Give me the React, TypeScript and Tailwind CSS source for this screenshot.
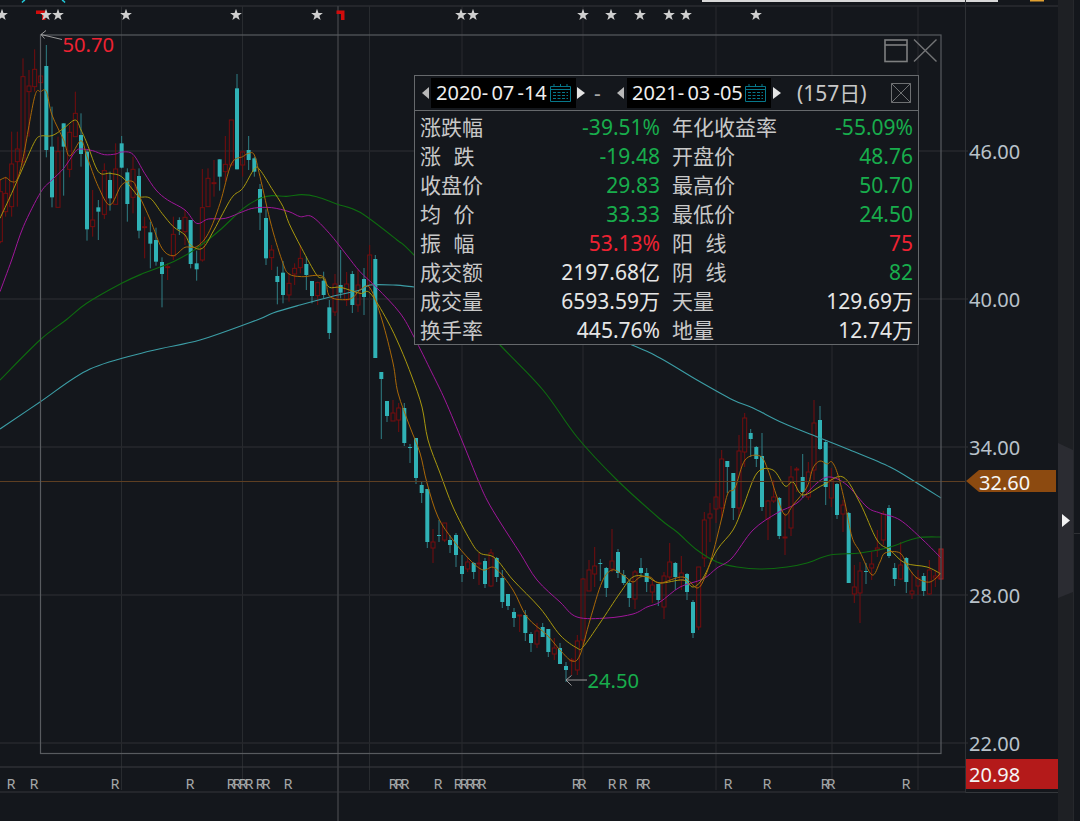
import React from "react";

type C = [number, number, number, number, number, number];
// x, bodyTop, bodyBottom, wickTop, wickBottom, kind (0 red hollow, 1 cyan)
const z = (a: number[][]): C[] =>
  a.map((r) => [r[0] / 3, r[1] / 3, r[2] / 3, r[3] / 3, r[4] / 3, r[5]] as C);

const candles: C[] = [
  ...z([
    [1, 575, 725, 540, 730, 0],
    [17, 580, 635, 530, 650, 0],
    [35, 492, 620, 395, 650, 0],
    [52, 447, 485, 395, 620, 0],
    [69, 230, 485, 175, 500, 0],
    [87, 258, 275, 210, 410, 0],
    [104, 208, 260, 148, 275, 0],
    [122, 228, 248, 228, 248, 0],
    [139, 198, 450, 135, 472, 1],
    [156, 440, 592, 320, 622, 1],
    [174, 455, 622, 410, 622, 0],
    [191, 370, 440, 370, 587, 1],
    [209, 397, 508, 375, 532, 0],
    [226, 340, 410, 275, 410, 0],
    [243, 405, 462, 340, 500, 1],
    [261, 455, 688, 450, 722, 1],
    [278, 660, 680, 570, 710, 0],
    [295, 622, 635, 600, 720, 1],
    [313, 512, 643, 490, 657, 0],
    [330, 540, 595, 515, 632, 1],
    [347, 507, 613, 430, 613, 0],
    [365, 430, 503, 408, 505, 1],
    [382, 517, 612, 505, 665, 1],
    [399, 508, 592, 470, 640, 0],
    [417, 528, 692, 505, 715, 1],
    [434, 680, 682, 650, 775, 0],
    [451, 697, 731, 665, 805, 1],
    [468, 720, 785, 683, 797, 1],
    [486, 786, 822, 772, 922, 1],
    [503, 800, 802, 790, 840, 0],
    [520, 703, 768, 650, 780, 0],
    [538, 660, 688, 652, 705, 1],
    [555, 652, 695, 630, 735, 0],
    [572, 660, 792, 660, 805, 1],
    [590, 790, 808, 752, 842, 1],
    [607, 623, 780, 507, 785, 0],
    [624, 535, 620, 505, 620, 0],
    [642, 548, 550, 480, 590, 0],
    [659, 478, 530, 478, 572, 1],
    [676, 493, 515, 408, 545, 0],
    [694, 360, 495, 360, 495, 0],
    [711, 265, 508, 222, 508, 1],
    [728, 456, 495, 452, 530, 0],
    [746, 450, 480, 408, 510, 1],
    [763, 475, 515, 470, 530, 1],
    [780, 567, 638, 552, 690, 1],
    [798, 654, 775, 628, 795, 1],
    [815, 750, 773, 735, 810, 0],
    [832, 828, 846, 800, 913, 1],
    [849, 818, 885, 783, 910, 1],
    [867, 850, 885, 818, 905, 0],
    [884, 805, 822, 790, 855, 0],
    [901, 775, 803, 735, 820, 0],
    [919, 792, 825, 770, 870, 1],
    [936, 843, 888, 843, 910, 1],
    [953, 848, 887, 845, 915, 0],
    [971, 842, 885, 815, 895, 1],
    [988, 922, 999, 900, 1017, 1],
    [1005, 852, 936, 822, 948, 0],
    [1022, 855, 878, 750, 895, 1],
    [1040, 852, 900, 816, 918, 0],
    [1057, 822, 915, 813, 939, 1],
    [1074, 855, 915, 810, 936, 0],
  ]),
  [364, 279, 297, 268, 315, 1],
  [369.7, 255, 285, 245, 290, 0],
  [375.3, 259, 358, 255, 358, 1],
  [381.3, 372, 379, 372, 439, 1],
  [387, 401, 416, 401, 422, 1],
  [393, 413, 421, 400, 421, 0],
  [398.7, 408, 420, 403, 432, 0],
  [404.3, 408, 443, 403, 446, 1],
  [410, 447, 448, 444, 463, 1],
  [416, 438, 478, 438, 484, 1],
  [421.7, 485, 493, 482, 503, 1],
  [427.3, 489, 542, 489, 548, 1],
  [433, 542, 548, 529, 563, 0],
  [439, 535, 536, 520, 542, 1],
  [444.7, 523, 540, 523, 542, 0],
  [450, 540, 545, 535, 553, 1],
  [456, 535, 555, 533, 567, 1],
  [462, 566, 574, 555, 582, 1],
  [467.7, 562, 569, 558, 572, 0],
  [473.7, 563, 572, 562, 579, 1],
  [479, 563, 564, 553, 585, 0],
  [485, 561, 584, 558, 588, 1],
  [491, 553, 586, 549, 587, 0],
  [496.7, 558, 577, 557, 582, 1],
  [502.3, 578, 602, 570, 608, 1],
  [508, 594, 606, 594, 610, 1],
  [514, 612, 618, 608, 627, 1],
  [519.7, 615, 616, 615, 632, 0],
  [525.3, 615, 633, 610, 641, 1],
  [531, 634, 643, 632, 652, 1],
  [537, 631, 644, 623, 648, 0],
  [542.7, 627, 637, 623, 637, 1],
  [548.3, 629, 652, 629, 657, 1],
  [554.3, 648, 654, 638, 660, 0],
  [560, 648, 664, 643, 664, 1],
  [566, 666, 670, 662, 682, 1],
  [571.7, 660, 661, 658, 675, 0],
  [577.3, 641, 670, 635, 675, 0],
  [583, 579, 640, 578, 645, 0],
  [589, 570, 591, 560, 591, 0],
  [594.7, 566, 574, 547, 587, 0],
  [600.3, 563, 564, 559, 581, 1],
  [606.3, 568, 588, 567, 597, 1],
  [612, 561, 569, 529, 572, 0],
  [618, 552, 573, 549, 578, 1],
  [623.7, 575, 583, 570, 585, 1],
  [629.3, 583, 598, 580, 607, 1],
  [635, 572, 599, 570, 609, 0],
  [641, 568, 573, 558, 577, 1],
  [646.7, 573, 582, 568, 592, 1],
  [652.3, 585, 592, 580, 603, 0],
  [658.3, 584, 600, 584, 606, 1],
  [664, 576, 607, 572, 619, 0],
  [669.7, 562, 577, 543, 582, 0],
  [675.3, 563, 577, 562, 590, 1],
  [681.3, 573, 580, 556, 590, 0],
  [687, 574, 592, 573, 600, 1],
  [693, 602, 633, 600, 638, 1],
  [698.7, 567, 627, 567, 630, 0],
  [704.3, 520, 558, 512, 567, 0],
  [710, 514, 518, 503, 542, 0],
  [716, 497, 509, 483, 523, 0],
  [721.7, 459, 508, 450, 518, 0],
  [727.3, 461, 467, 461, 493, 1],
  [733.3, 473, 508, 473, 520, 1],
  [739, 451, 508, 435, 517, 0],
  [744.7, 418, 452, 413, 467, 0],
  [750.7, 433, 439, 429, 457, 1],
  [756.3, 447, 459, 446, 467, 1],
  [762, 456, 507, 433, 511, 1],
  [768, 501, 519, 500, 540, 0],
  [773.7, 497, 501, 480, 503, 0],
  [779.3, 498, 536, 497, 539, 1],
  [785, 537, 538, 513, 555, 0],
  [791, 477, 528, 466, 536, 0],
  [796.7, 469, 470, 467, 492, 0],
  [802.7, 477, 492, 454, 498, 1],
  [808.3, 472, 497, 462, 500, 0],
  [814, 423, 470, 400, 480, 0],
  [820, 420, 449, 406, 450, 1],
  [825.7, 442, 487, 440, 505, 1],
  [831.3, 480, 498, 468, 507, 0],
  [837, 484, 515, 483, 519, 1],
  [843, 505, 514, 500, 532, 0],
  [848.7, 513, 583, 512, 583, 1],
  [854.3, 587, 594, 565, 603, 0],
  [860, 571, 593, 562, 623, 0],
  [866, 571, 572, 563, 584, 1],
  [871.7, 564, 568, 552, 580, 0],
  [877.3, 548, 550, 530, 557, 0],
  [883.3, 514, 540, 511, 545, 0],
  [889, 508, 556, 505, 558, 1],
  [894.7, 568, 579, 563, 586, 1],
  [900.7, 565, 579, 542, 580, 0],
  [906.3, 558, 582, 557, 593, 1],
  [912, 591, 594, 572, 599, 0],
  [918, 578, 586, 570, 595, 0],
  [923.7, 576, 591, 573, 596, 1],
  [929.3, 570, 594, 560, 595, 0],
  [935.3, 576, 578, 570, 587, 0],
];

const p3 = (a: number[]) => {
  const out: string[] = [];
  for (let i = 0; i < a.length; i += 2) out.push(`${a[i] / 3},${a[i + 1] / 3}`);
  return out.join(" ");
};

// Catmull-Rom through the sampled points, so the averages read as curves
const smooth = (s: string) => {
  const p = s.trim().split(/\s+/).map((q) => q.split(",").map(Number));
  let d = `M${p[0][0]} ${p[0][1]}`;
  for (let i = 0; i < p.length - 1; i++) {
    const a = p[Math.max(i - 1, 0)];
    const b = p[i];
    const c = p[i + 1];
    const e = p[Math.min(i + 2, p.length - 1)];
    d += `C${b[0] + (c[0] - a[0]) / 6} ${b[1] + (c[1] - a[1]) / 6} ${c[0] - (e[0] - b[0]) / 6} ${c[1] - (e[1] - b[1]) / 6} ${c[0]} ${c[1]}`;
  }
  return d;
};

const orange =
  p3([0, 540, 18, 533, 35, 545, 52, 537, 70, 470, 104, 290, 122, 275, 139, 275, 156, 345, 191, 420, 209, 468, 243, 422, 261, 470, 295, 560, 330, 615, 365, 555, 399, 545, 417, 585, 451, 660, 486, 745, 520, 767, 555, 742, 590, 740, 625, 700, 660, 610, 694, 492, 728, 470, 746, 460, 763, 465, 780, 530, 815, 680, 849, 790, 867, 822, 905, 830, 970, 830, 990, 890, 1050, 897, 1080, 870]) +
  " 370,288 382,320 393,363 398,393 410,427 420,453 427,483 438,517 453,540 470,560 483,570 495,568 513,590 527,617 547,635 560,650 572,661 580,655 590,620 602,582 612,570 623,575 633,582 640,577 650,577 660,583 683,577 697,588 705,577 713,553 722,517 728,493 735,488 745,460 760,456 768,470 777,497 785,515 793,505 807,487 813,468 820,461 827,464 832,462 838,475 845,503 852,537 860,552 872,575 880,562 885,553 900,553 908,567 917,578 930,582 941,573";

const yellow =
  p3([0, 655, 35, 580, 70, 500, 104, 425, 122, 408, 156, 407, 191, 385, 226, 360, 243, 390, 261, 430, 295, 515, 330, 520, 365, 530, 399, 570, 417, 590, 451, 595, 486, 640, 520, 680, 555, 705, 572, 735, 607, 745, 642, 690, 694, 595, 728, 565, 763, 507, 780, 510, 815, 565, 849, 620, 867, 670, 905, 745, 950, 825, 970, 835, 988, 862, 1022, 862, 1080, 880]) +
  " 370,293 387,320 400,347 412,377 422,407 428,440 440,473 453,507 470,540 480,553 495,558 513,580 540,608 560,635 577,648 583,647 600,623 620,593 633,577 647,577 660,583 683,580 693,587 703,578 717,550 733,530 743,507 757,473 773,470 785,486 793,482 803,495 823,485 843,477 860,503 877,540 890,550 905,563 927,567 941,574";

const magenta =
  p3([0, 875, 35, 780, 70, 680, 122, 577, 156, 540, 191, 505, 226, 455, 243, 447, 278, 452, 313, 464, 347, 462, 365, 456, 399, 463, 434, 520, 468, 570, 503, 600, 555, 630, 590, 670, 625, 657, 676, 655, 728, 635, 763, 624, 815, 623, 867, 635, 901, 650, 936, 650, 988, 700, 1040, 765, 1080, 815]) +
  " 377,288 400,313 414,337 432,373 445,400 463,443 478,480 487,500 500,522 520,553 537,580 560,602 577,617 607,618 633,614 647,607 660,602 680,587 703,579 717,568 732,558 753,530 777,513 797,503 817,483 830,477 847,485 867,507 880,513 900,520 923,540 941,558";

const green =
  "0,380 40,340 66,320 " +
  p3([260, 910, 365, 850, 430, 820, 520, 785, 590, 745, 660, 690, 730, 625, 780, 595, 815, 587, 860, 589, 905, 584, 950, 590, 1010, 612, 1080, 637]) +
  " 397,240 414,255 500,345 543,390 577,437 617,480 660,519 677,532 697,550 717,562 737,567 760,569 787,567 807,563 830,555 860,553 887,548 917,538 941,537";

const teal =
  "0,429 40,402 90,369 150,351 200,340 257,320 273,313 300,305 330,297 360,290 370,285 393,285 414,287 520,300 632,345 660,358 697,380 733,400 753,408 783,423 820,438 850,450 890,467 917,483 941,498";

const stars = [2, 46, 58, 126, 236, 317, 461, 473, 583, 611, 640, 669, 686, 756];
const starPts = (cx: number, cy: number, r: number) => {
  const pts: string[] = [];
  for (let i = 0; i < 10; i++) {
    const a = -Math.PI / 2 + (i * Math.PI) / 5;
    const rr = i % 2 === 0 ? r : r * 0.4;
    pts.push(`${cx + rr * Math.cos(a)},${cy + rr * Math.sin(a)}`);
  }
  return pts.join(" ");
};

const rs = [11, 34, 115, 190, 231, 237, 243, 249, 260, 266, 288, 393, 399, 405, 438, 458, 464, 470, 476, 482, 576, 582, 612, 623, 640, 646, 728, 767, 825, 831, 906];
const vGrid = [121.5, 242.5, 369.5, 462, 583, 716, 832, 918];
const hGrid = [151, 299, 447, 595, 743];

function Chart() {
  return (
    <svg width={965} height={821} viewBox="0 0 965 821" className="block overflow-visible">
      {/* top clipped row */}
      <rect x={702} y={0} width={296} height={2} fill="#d8d8d8" />
      <rect x={1030} y={0} width={14} height={1.5} fill="#e0a030" />
      <path d="M25 0q-2 1-3 2.5M62 0q2 1 3 2.5" stroke="#22c8d8" strokeWidth={1.4} fill="none" />
      <line x1={0} y1={6} x2={1058} y2={6} stroke="#2a2d31" strokeWidth={1.5} />

      {/* grid */}
      {vGrid.map((x) => (
        <line key={x} x1={x} y1={6} x2={x} y2={790} stroke="#282b2f" strokeWidth={1} />
      ))}
      {hGrid.map((y) => (
        <line key={y} x1={0} y1={y} x2={968} y2={y} stroke="#26292d" strokeWidth={1.5} />
      ))}
      <line x1={0} y1={767} x2={1058} y2={767} stroke="#3a3d41" strokeWidth={1} />
      <line x1={0} y1={792} x2={965} y2={792} stroke="#34373b" strokeWidth={1} />
      <line x1={338} y1={6} x2={338} y2={821} stroke="#3a3d41" strokeWidth={1.6} />

      {/* candles */}
      {candles.map((c, i) => {
        const [x, t, b, wt, wb, k] = c;
        return k === 1 ? (
          <g key={i}>
            <line x1={x} y1={wt} x2={x} y2={wb} stroke="#2f7f85" strokeWidth={1} />
            <rect x={x - 2} y={t} width={4} height={Math.max(b - t, 1)} fill="#30b2b6" />
          </g>
        ) : (
          <g key={i}>
            <line x1={x} y1={wt} x2={x} y2={t} stroke="#760d0e" strokeWidth={1} />
            <line x1={x} y1={b} x2={x} y2={wb} stroke="#760d0e" strokeWidth={1} />
            <rect x={x - 2} y={t} width={4} height={Math.max(b - t, 1)} fill="none" stroke="#760d0e" strokeWidth={1} />
          </g>
        );
      })}
      <rect x={939} y={549} width={4} height={30} fill="#4a0d10" stroke="#b0181c" strokeWidth={1} />

      {/* moving averages */}
      <path d={smooth(teal)} fill="none" stroke="#3c9ea6" strokeWidth={1.1} />
      <path d={smooth(green)} fill="none" stroke="#0e6c10" strokeWidth={1.1} />
      <path d={smooth(magenta)} fill="none" stroke="#a0169a" strokeWidth={1} />
      <path d={smooth(yellow)} fill="none" stroke="#a8970e" strokeWidth={1} />
      <path d={smooth(orange)} fill="none" stroke="#a96808" strokeWidth={1} />

      {/* crosshair */}
      <line x1={0} y1={481.5} x2={965} y2={481.5} stroke="#5e3f22" strokeWidth={1} />

      {/* star markers */}
      <path d="M36 10.5h9.5v9.5h-3.5v-6h-6z" fill="#d00c0c" />
      <path d="M336.5 10.5h8v9.5h-3.5v-6h-4.5z" fill="#d00c0c" />
      {stars.map((x) => (
        <polygon key={x} points={starPts(x, 15, 6.2)} fill="#cfcfcf" />
      ))}

      {/* selection frame */}
      <rect x={40.5} y={35} width={900.5} height={718.5} fill="none" stroke="#585b5f" strokeWidth={1.2} />
      <rect x={885} y={40} width={22} height={21.5} fill="none" stroke="#7e7f80" strokeWidth={1.6} />
      <line x1={885} y1={45} x2={907} y2={45} stroke="#7e7f80" strokeWidth={1.6} />
      <path d="M914 39.5L936.5 61.5M936.5 39.5L914 61.5" stroke="#737476" strokeWidth={1.4} fill="none" />

      {/* extreme arrows */}
      <path d="M62 39.5L41 34.5M41 34.5L46 30.5M41 34.5L44.5 38.5" stroke="#a8a8a8" strokeWidth={0.9} fill="none" />
      <path d="M587 680H566M571.5 675.5L566 680L571.5 685.5" stroke="#a8a8a8" strokeWidth={0.9} fill="none" />
      <text x={62.5} y={51.5} fontSize={20.2} fill="#ee2232">50.70</text>
      <text x={587.5} y={688} fontSize={20.2} fill="#18ad4c">24.50</text>

      {/* R markers */}
      {rs.map((x, i) => (
        <text key={i} x={x} y={789} fontSize={14.5} fill="#a4a6a8" textAnchor="middle">
          R
        </text>
      ))}
    </svg>
  );
}

function Cal() {
  return (
    <svg width={21} height={18} viewBox="0 0 21 18" className="ml-auto mr-[5px] shrink-0" fill="none" stroke="#07778a">
      <path d="M.5 2.5h20v15H.5zM.5 5.5h20" />
      <path d="M4 0v3M10.5 0v3M17 0v3" />
      <path d="M3 8.5h15M3 11.5h15M3 14.5h15" strokeDasharray="3 1.5" />
    </svg>
  );
}

const Tri = ({ dir, c, cls }: { dir: "l" | "r"; c: string; cls: string }) => (
  <svg width={8} height={12} viewBox="0 0 8 12" className={cls}>
    <polygon points={dir === "l" ? "7,0 7,12 0,6" : "0,0 0,12 8,6"} fill={c} />
  </svg>
);

const G = "text-[#18ad4c]";
const R = "text-[#ee2232]";
const W = "text-[#e6e6e6]";
const rows: [string, string, string, string, string, string][] = [
  ["涨跌幅", "-39.51%", G, "年化收益率", "-55.09%", G],
  ["涨 跌", "-19.48", G, "开盘价", "48.76", G],
  ["收盘价", "29.83", G, "最高价", "50.70", G],
  ["均 价", "33.33", G, "最低价", "24.50", G],
  ["振 幅", "53.13%", R, "阳 线", "75", R],
  ["成交额", "2197.68亿", W, "阴 线", "82", G],
  ["成交量", "6593.59万", W, "天量", "129.69万", W],
  ["换手率", "445.76%", W, "地量", "12.74万", W],
];

function Panel() {
  return (
    <div className="absolute left-[414px] top-[75px] w-[505px] h-[270px] bg-[#14171c] border border-[#66696c] flex flex-col text-[21px] leading-none">
      <div className="h-[35px] shrink-0 flex items-center pl-[7px] border-b border-[#66696c] text-[#d8d8d8]">
        <Tri dir="l" c="#b8b8b8" cls="shrink-0" />
        <div className="ml-[1px] w-[145px] h-[30px] bg-black flex items-center pl-[5px] shrink-0 text-[20px] text-[#eeeeee] [word-spacing:-2px] whitespace-nowrap">
          2020- 07 -14
          <Cal />
        </div>
        <Tri dir="r" c="#e4e4e4" cls="ml-[1px] shrink-0" />
        <span className="ml-[9px] w-[16px] text-[#a8a8a8]">-</span>
        <Tri dir="l" c="#b8b8b8" cls="ml-[7px] shrink-0" />
        <div className="ml-[2px] w-[144px] h-[30px] bg-black flex items-center pl-[5px] shrink-0 text-[20px] text-[#eeeeee] [word-spacing:-2px] whitespace-nowrap">
          2021- 03 -05
          <Cal />
        </div>
        <Tri dir="r" c="#e4e4e4" cls="ml-[2px] shrink-0" />
        <span className="ml-[16px] text-[#c8c8c8] whitespace-nowrap">(157日)</span>
        <svg width={20} height={20} viewBox="0 0 20 20" className="ml-[24px] shrink-0" fill="none" stroke="#6e7072">
          <path d="M.5.5h19v19H.5zM.5.5l19 19M19.5.5l-19 19" />
        </svg>
      </div>
      <div className="pt-[2px] pl-[5px] pr-[5px]">
        {rows.map((r) => (
          <div key={r[0]} className="h-[29px] grid grid-cols-[240px_241px] gap-x-[12px] items-center">
            <div className="flex justify-between items-center">
              <span className="text-[#c8c8c8] [word-spacing:7px]">{r[0]}</span>
              <span className={r[2]}>{r[1]}</span>
            </div>
            <div className="flex justify-between items-center">
              <span className="text-[#c8c8c8] [word-spacing:7px]">{r[3]}</span>
              <span className={r[5]}>{r[4]}</span>
            </div>
          </div>
        ))}
      </div>
    </div>
  );
}

function Axis() {
  return (
    <div className="relative w-[93px] h-[793px] shrink-0 border-l border-[#2e3135] flex flex-col text-[20px] leading-[28px] text-[#b9c2ca]">
      <div className="pt-[138px] pl-[3px] flex flex-col gap-[120px]">
        {["46.00", "40.00", "34.00", "28.00", "22.00"].map((t) => (
          <span key={t} className="h-[28px]">
            {t}
          </span>
        ))}
      </div>
      <div className="mt-[1px] h-[30px] bg-[#b41a1a] text-[#f4f4f4] flex items-center pl-[3px] pt-[1px]">20.98</div>
      <div className="mt-[3px] border-t border-[#34373b]" />
      <div className="absolute left-0 top-[470px] w-[90px] h-[22px] bg-[#8c4a10] [clip-path:polygon(0_50%,13px_0,100%_0,100%_100%,13px_100%)] text-[#f6f6f6] leading-[25px] pl-[13px]">
        32.60
      </div>
    </div>
  );
}

export default function App() {
  return (
    <div className="relative w-[1080px] h-[821px] overflow-hidden bg-[#14171c] flex items-start font-['Noto_Sans','Noto_Sans_CJK_SC',sans-serif]">
      <div className="relative w-[965px] shrink-0">
        <Chart />
        <Panel />
      </div>
      <Axis />
      <div className="w-[15px] h-full shrink-0 bg-[#1e2024] pt-[443px]">
        <div className="h-[155px] bg-[#2b2c32] pt-[71px] pl-[4px] [clip-path:polygon(0_0,100%_7px,100%_149px,0_100%)]">
          <svg width={8} height={13} viewBox="0 0 8 13" className="block">
            <polygon points="0,0 0,13 8,6.5" fill="#f2f2f2" />
          </svg>
        </div>
      </div>
      <div className="w-[7px] h-full shrink-0 border-l border-[#26282c] pt-[533px]">
        <div className="border-t border-[#2e3034]" />
      </div>
    </div>
  );
}
